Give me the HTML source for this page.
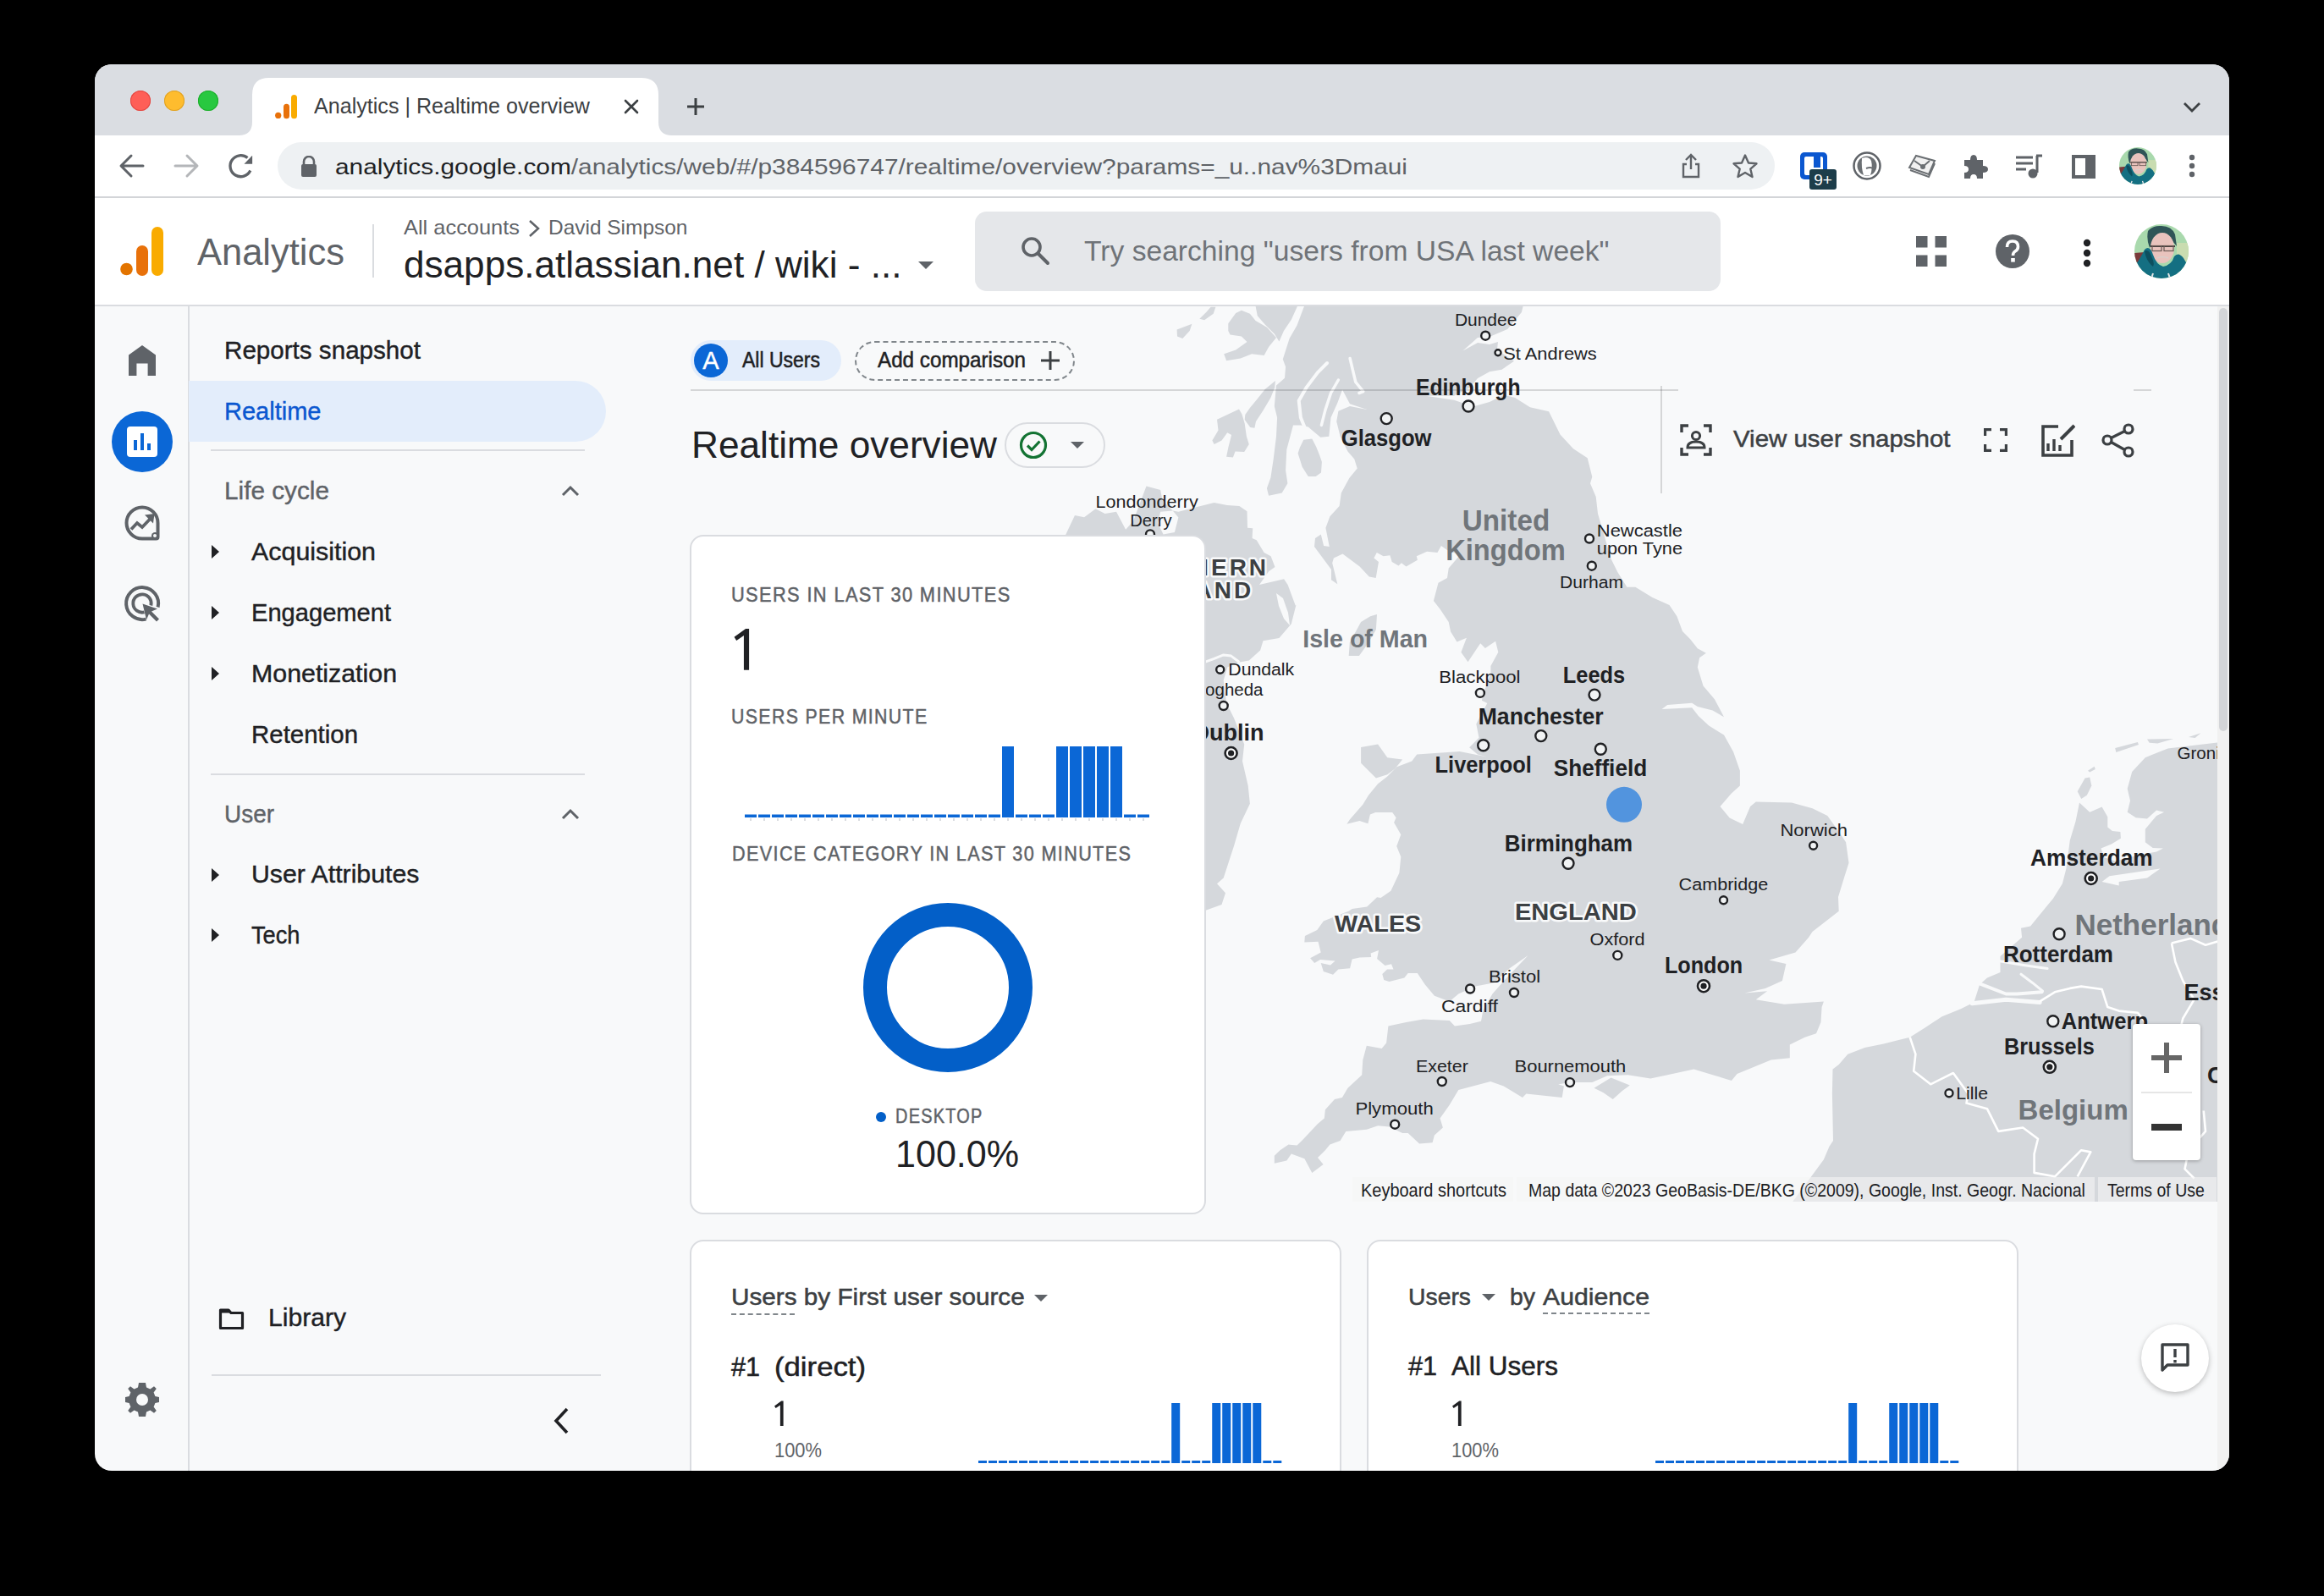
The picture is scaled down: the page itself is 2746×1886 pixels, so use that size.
<!DOCTYPE html>
<html><head><meta charset="utf-8"><style>
html,body{margin:0;padding:0;}
body{width:2746px;height:1886px;background:#000;position:relative;overflow:hidden;font-family:"Liberation Sans", sans-serif;}
.t{position:absolute;white-space:nowrap;}
.r{position:absolute;}
#W{position:absolute;left:0;top:0;width:2746px;height:1886px;clip-path:inset(76px 112px 148px 112px round 20px);}
#win{position:absolute;left:112px;top:76px;width:2522px;height:1662px;background:#f8f9fa;}
</style></head><body>
<div id="W"><div id="win"></div>
<div class="r" style="left:112px;top:76px;width:2522px;height:84px;background:#dadde2;"></div><div class="r" style="left:154px;top:107px;width:24px;height:24px;border-radius:50%;background:#fe5f57;box-shadow:inset 0 0 0 1px #e14640;"></div><div class="r" style="left:194px;top:107px;width:24px;height:24px;border-radius:50%;background:#febc2e;box-shadow:inset 0 0 0 1px #dfa123;"></div><div class="r" style="left:234px;top:107px;width:24px;height:24px;border-radius:50%;background:#28c840;box-shadow:inset 0 0 0 1px #1dad2b;"></div><svg class="r" style="left:282px;top:92px;" width="512" height="68" viewBox="0 0 512 68"><path d="M0 68 Q16 68 16 52 L16 20 Q16 0 36 0 L476 0 Q496 0 496 20 L496 52 Q496 68 512 68 Z" fill="#fff"/></svg><svg class="r" style="left:324px;top:110px;" width="30" height="32" viewBox="0 0 30 32"><circle cx="4.7" cy="26.4" r="3.6" fill="#e8710a"/><rect x="11" y="12.7" width="7" height="17.5" rx="3.5" fill="#e8710a"/><rect x="20" y="2" width="7" height="28.2" rx="3.5" fill="#f9ab00"/></svg><div class="t " style="left:371px;top:113.3px;font-size:25px;line-height:25px;color:#3c4043;font-weight:400;letter-spacing:0px;transform:scaleX(1.0041);transform-origin:0 0;">Analytics | Realtime overview</div><svg class="r" style="left:736px;top:116px;" width="20" height="20" viewBox="0 0 20 20"><path d="M3 3 L17 17 M17 3 L3 17" stroke="#3c4043" stroke-width="2.6" stroke-linecap="round"/></svg><svg class="r" style="left:810px;top:114px;" width="24" height="24" viewBox="0 0 24 24"><path d="M12 2 V22 M2 12 H22" stroke="#3c4043" stroke-width="3"/></svg><svg class="r" style="left:2578px;top:118px;" width="24" height="16" viewBox="0 0 24 16"><path d="M3 4 L12 13 L21 4" stroke="#3c4043" stroke-width="2.8" fill="none"/></svg><div class="r" style="left:112px;top:160px;width:2522px;height:72px;background:#ffffff;"></div><div class="r" style="left:112px;top:232px;width:2522px;height:2px;background:#d3d5d8;"></div><svg class="r" style="left:140px;top:181px;" width="32" height="30" viewBox="0 0 32 30"><path d="M29 15 H5 M15 3 L3 15 L15 27" stroke="#5f6368" stroke-width="3" fill="none" stroke-linecap="round" stroke-linejoin="round"/></svg><svg class="r" style="left:204px;top:181px;" width="32" height="30" viewBox="0 0 32 30"><path d="M3 15 H27 M17 3 L29 15 L17 27" stroke="#b4b6b9" stroke-width="3" fill="none" stroke-linecap="round" stroke-linejoin="round"/></svg><svg class="r" style="left:268px;top:181px;" width="34" height="32" viewBox="0 0 34 32"><path d="M24.5 5.6 A12.5 12.5 0 1 0 27.8 20.5" stroke="#5f6368" stroke-width="3.3" fill="none"/><path d="M30.1 2.7 L30.1 12.7 L20.5 12.7 Z" fill="#5f6368"/></svg><div class="r" style="left:328px;top:168px;width:1769px;height:56px;background:#eef1f3;border-radius:28px;"></div><svg class="r" style="left:354px;top:184px;" width="22" height="26" viewBox="0 0 22 26"><path d="M5 11 V7 A6 6 0 0 1 17 7 V11" stroke="#5f6368" stroke-width="2.6" fill="none"/><rect x="2" y="10" width="18" height="15" rx="2" fill="#5f6368"/></svg><div class="t " style="left:396px;top:184.0px;font-size:26px;line-height:26px;color:#5f6368;font-weight:400;letter-spacing:0px;transform:scaleX(1.1482);transform-origin:0 0;"><span style="color:#202124">analytics.google.com</span>/analytics/web/#/p384596747/realtime/overview?params=_u..nav%3Dmaui</div><svg class="r" style="left:1984px;top:180px;" width="28" height="32" viewBox="0 0 28 32"><path d="M14 20 V3 M8 9 L14 3 L20 9" stroke="#5f6368" stroke-width="2.4" fill="none"/><path d="M9 14 H5 V29 H23 V14 H19" stroke="#5f6368" stroke-width="2.4" fill="none"/></svg><svg class="r" style="left:2046px;top:181px;" width="32" height="32" viewBox="0 0 32 32"><path d="M16 2.5 L20 11.5 L29.5 12.3 L22.3 18.6 L24.5 28 L16 23 L7.5 28 L9.7 18.6 L2.5 12.3 L12 11.5 Z" stroke="#5f6368" stroke-width="2.4" fill="none" stroke-linejoin="round"/></svg><svg class="r" style="left:2124px;top:178px;" width="50" height="48" viewBox="0 0 50 48"><rect x="3" y="2" width="32" height="32" rx="5" fill="#0b57d0"/><rect x="8" y="7" width="22" height="22" rx="2" fill="#fff"/><rect x="19" y="7" width="8" height="13" fill="#0b57d0"/><rect x="14" y="22" width="32" height="24" rx="3" fill="#1d3d4a"/><text x="30" y="41" font-family="Liberation Sans" font-size="19" fill="#fff" text-anchor="middle">9+</text></svg><svg class="r" style="left:2188px;top:178px;" width="36" height="36" viewBox="0 0 36 36"><circle cx="18" cy="18" r="15.5" fill="#fff" stroke="#5f6368" stroke-width="2.5"/><circle cx="18" cy="18" r="11.5" fill="#6b6f73"/><path d="M12 9 Q20 6 23 12 Q25 20 22 29 L14 29 Q11 20 12 9Z" fill="#fff"/><path d="M17 21 Q22 19 25 21" stroke="#6b6f73" stroke-width="2" fill="none"/></svg><svg class="r" style="left:2252px;top:178px;" width="38" height="36" viewBox="0 0 38 36"><path d="M4 20 L12 6 L34 12 L27 28 Z" fill="#f1f1f1" stroke="#6b6f73" stroke-width="2"/><path d="M5 23 L27 31 L34 15" stroke="#6b6f73" stroke-width="2" fill="none"/><path d="M10 12 L20 19 L28 12" stroke="#6b6f73" stroke-width="2" fill="none"/><circle cx="20" cy="19" r="3" fill="#6b6f73"/></svg><svg class="r" style="left:2318px;top:180px;" width="32" height="32" viewBox="0 0 32 32"><path d="M3 9 H10 Q10 3 14 3 Q18 3 18 9 H25 V16 Q31 16 31 20 Q31 24 25 24 V31 H18 Q18 26 14 26 Q10 26 10 31 H3 V24 Q8 24 8 20 Q8 16 3 16 Z" fill="#5f6368"/></svg><svg class="r" style="left:2380px;top:180px;" width="36" height="32" viewBox="0 0 36 32"><path d="M2 6 H22 M2 13 H22 M2 20 H14" stroke="#5f6368" stroke-width="3"/><path d="M26 4 H33" stroke="#5f6368" stroke-width="3"/><path d="M27 4 V24" stroke="#5f6368" stroke-width="3"/><circle cx="22" cy="25" r="5.5" fill="#5f6368"/></svg><svg class="r" style="left:2446px;top:181px;" width="32" height="32" viewBox="0 0 32 32"><rect x="4" y="4" width="24" height="24" fill="none" stroke="#5f6368" stroke-width="4"/><rect x="18" y="4" width="10" height="24" fill="#5f6368"/></svg><svg class="r" style="left:2504px;top:174px;" width="44" height="44" viewBox="0 0 64 64"><defs><clipPath id="av2526"><circle cx="32" cy="32" r="32"/></clipPath></defs><g clip-path="url(#av2526)"><rect x="0" y="0" width="64" height="64" fill="#a9d9ad"/><rect x="50" y="22" width="14" height="22" fill="#c9dcb0"/><path d="M0 34 L12 33 L12 44 L0 46Z" fill="#7a3a3a"/><path d="M16 8 Q22 1 32 2 Q44 2 48 12 L50 26 L45 20 Q40 11 30 12 Q22 13 20 24 L18 28 Q14 18 16 8Z" fill="#2f5557"/><ellipse cx="33" cy="28" rx="14" ry="18" fill="#e9c3bd"/><path d="M19 26 H48" stroke="#4a4040" stroke-width="1.8"/><rect x="21" y="25.5" width="11" height="6" fill="none" stroke="#6a5a55" stroke-width="1.2"/><rect x="35" y="25.5" width="11" height="6" fill="none" stroke="#6a5a55" stroke-width="1.2"/><path d="M27 40 Q33 37 40 40" stroke="#d8d0cc" stroke-width="1.6" fill="none"/><path d="M0 50 Q6 42 12 30 Q18 24 22 36 Q26 48 34 50 Q44 48 47 38 Q52 32 58 40 Q62 46 64 52 L64 64 L0 64Z" fill="#146f82"/><path d="M12 32 Q17 28 21 40 Q24 46 22 50 Q14 44 12 32Z" fill="#0d4f5e"/><path d="M22 58 L20 64 M40 58 L42 64" stroke="#e8e8e8" stroke-width="2"/></g></svg><svg class="r" style="left:2580px;top:180px;" width="20" height="32" viewBox="0 0 20 32"><circle cx="10" cy="6" r="3.2" fill="#5f6368"/><circle cx="10" cy="16" r="3.2" fill="#5f6368"/><circle cx="10" cy="26" r="3.2" fill="#5f6368"/></svg><div class="r" style="left:112px;top:234px;width:2522px;height:126px;background:#ffffff;"></div><div class="r" style="left:112px;top:360px;width:2522px;height:2px;background:#dadce0;"></div><svg class="r" style="left:140px;top:266px;" width="56" height="62" viewBox="0 0 56 62"><circle cx="9.5" cy="52" r="7.3" fill="#e37400"/><rect x="21" y="24" width="14" height="36" rx="7" fill="#e8710a"/><rect x="39" y="2" width="14" height="58" rx="7" fill="#f9ab00"/></svg><div class="t " style="left:233px;top:275.8px;font-size:44px;line-height:44px;color:#5f6368;font-weight:400;letter-spacing:0px;transform:scaleX(0.9883);transform-origin:0 0;">Analytics</div><div class="r" style="left:440px;top:265px;width:2px;height:63px;background:#dadce0;"></div><div class="t " style="left:476.6px;top:256.7px;font-size:24px;line-height:24px;color:#5f6368;font-weight:400;letter-spacing:0px;transform:scaleX(1.0587);transform-origin:0 0;">All accounts</div><svg class="r" style="left:622px;top:259px;" width="18" height="22" viewBox="0 0 18 22"><path d="M4 2 L14 11 L4 20" stroke="#5f6368" stroke-width="2.5" fill="none"/></svg><div class="t " style="left:647.6px;top:256.7px;font-size:24px;line-height:24px;color:#5f6368;font-weight:400;letter-spacing:0px;transform:scaleX(1.0186);transform-origin:0 0;">David Simpson</div><div class="t " style="left:476.6px;top:290.8px;font-size:44px;line-height:44px;color:#202124;font-weight:400;letter-spacing:0px;transform:scaleX(1.0025);transform-origin:0 0;">dsapps.atlassian.net / wiki - ...</div><svg class="r" style="left:1084px;top:308px;" width="20" height="12" viewBox="0 0 20 12"><path d="M1 1 L19 1 L10 10 Z" fill="#5f6368"/></svg><div class="r" style="left:1152px;top:250px;width:881px;height:94px;background:#e5e7ea;border-radius:14px;"></div><svg class="r" style="left:1205px;top:278px;" width="36" height="38" viewBox="0 0 36 38"><circle cx="14" cy="14" r="10" stroke="#5f6368" stroke-width="3.6" fill="none"/><path d="M21.5 21.5 L33 33" stroke="#5f6368" stroke-width="4" stroke-linecap="round"/></svg><div class="t " style="left:1281px;top:280.1px;font-size:33px;line-height:33px;color:#6f7378;font-weight:400;letter-spacing:0px;transform:scaleX(1.0188);transform-origin:0 0;">Try searching "users from USA last week"</div><svg class="r" style="left:2262px;top:277px;" width="40" height="40" viewBox="0 0 40 40"><rect x="2" y="2" width="13.5" height="13.5" fill="#5f6368"/><rect x="24.5" y="2" width="13.5" height="13.5" fill="#5f6368"/><rect x="2" y="24.5" width="13.5" height="13.5" fill="#5f6368"/><rect x="24.5" y="24.5" width="13.5" height="13.5" fill="#5f6368"/></svg><svg class="r" style="left:2356px;top:275px;" width="44" height="44" viewBox="0 0 44 44"><circle cx="22" cy="22" r="20" fill="#5f6368"/><path d="M15.5 17 Q15.5 10 22 10 Q28.5 10 28.5 16.5 Q28.5 20 25 22 Q22.5 23.5 22.5 27" stroke="#fff" stroke-width="3.6" fill="none"/><rect x="20.2" y="30" width="4.6" height="4.6" fill="#fff"/></svg><svg class="r" style="left:2455px;top:280px;" width="22" height="38" viewBox="0 0 22 38"><circle cx="11" cy="7" r="4.2" fill="#202124"/><circle cx="11" cy="19" r="4.2" fill="#202124"/><circle cx="11" cy="31" r="4.2" fill="#202124"/></svg><svg class="r" style="left:2522px;top:265px;" width="64" height="64" viewBox="0 0 64 64"><defs><clipPath id="av2554"><circle cx="32" cy="32" r="32"/></clipPath></defs><g clip-path="url(#av2554)"><rect x="0" y="0" width="64" height="64" fill="#a9d9ad"/><rect x="50" y="22" width="14" height="22" fill="#c9dcb0"/><path d="M0 34 L12 33 L12 44 L0 46Z" fill="#7a3a3a"/><path d="M16 8 Q22 1 32 2 Q44 2 48 12 L50 26 L45 20 Q40 11 30 12 Q22 13 20 24 L18 28 Q14 18 16 8Z" fill="#2f5557"/><ellipse cx="33" cy="28" rx="14" ry="18" fill="#e9c3bd"/><path d="M19 26 H48" stroke="#4a4040" stroke-width="1.8"/><rect x="21" y="25.5" width="11" height="6" fill="none" stroke="#6a5a55" stroke-width="1.2"/><rect x="35" y="25.5" width="11" height="6" fill="none" stroke="#6a5a55" stroke-width="1.2"/><path d="M27 40 Q33 37 40 40" stroke="#d8d0cc" stroke-width="1.6" fill="none"/><path d="M0 50 Q6 42 12 30 Q18 24 22 36 Q26 48 34 50 Q44 48 47 38 Q52 32 58 40 Q62 46 64 52 L64 64 L0 64Z" fill="#146f82"/><path d="M12 32 Q17 28 21 40 Q24 46 22 50 Q14 44 12 32Z" fill="#0d4f5e"/><path d="M22 58 L20 64 M40 58 L42 64" stroke="#e8e8e8" stroke-width="2"/></g></svg><div class="r" style="left:222px;top:362px;width:2px;height:1376px;background:#dadce0;"></div><svg class="r" style="left:152px;top:408px;" width="32" height="36" viewBox="0 0 32 36"><path d="M16 0 L32 11.5 L32 36 L22.6 36 L22.6 21.5 L9.4 21.5 L9.4 36 L0 36 L0 11.5 Z" fill="#5f6368"/></svg><div class="r" style="left:132px;top:486px;width:72px;height:72px;border-radius:50%;background:#0b67d6;"></div><svg class="r" style="left:150px;top:504px;" width="36" height="36" viewBox="0 0 36 36"><rect x="0" y="0" width="36" height="36" rx="4" fill="#fff"/><rect x="8" y="16" width="4" height="12" fill="#0b67d6"/><rect x="16" y="8" width="4" height="20" fill="#0b67d6"/><rect x="24" y="20" width="4" height="8" fill="#0b67d6"/></svg><svg class="r" style="left:146px;top:596px;" width="44" height="44" viewBox="0 0 44 44"><path d="M22 3.5 A18.5 18.5 0 1 0 22 40.5 L38.5 40.5 Q40.5 40.5 40.5 38.5 L40.5 22 A18.5 18.5 0 0 0 22 3.5 Z" stroke="#5f6368" stroke-width="4" fill="none"/><path d="M9 29.5 L16 22 L22 27 L32 16.5" stroke="#5f6368" stroke-width="3.8" fill="none"/><path d="M25 12.5 L36.5 11 L35 22.5 Z" fill="#5f6368"/><circle cx="37.2" cy="37.2" r="4.2" fill="#5f6368"/><circle cx="37" cy="37" r="2" fill="#f8f9fa"/></svg><svg class="r" style="left:146px;top:691px;" width="48" height="48" viewBox="0 0 48 48"><g transform="translate(2 2)"><path d="M38.6 24.5 A19 19 0 1 0 24.5 38.6" stroke="#5f6368" stroke-width="4" fill="none"/><path d="M30.4 22.5 A10.7 10.7 0 1 0 22.5 30.4" stroke="#5f6368" stroke-width="3.8" fill="none"/><path d="M20.5 20.5 L38 26.5 L31 29.5 L40 38.5 L37 41.5 L28 32.5 L25 39.5 Z" fill="#5f6368"/></g></svg><svg class="r" style="left:148px;top:1634px;" width="40" height="40" viewBox="0 0 40 40"><path fill="#5f6368" d="M20 0 L24 0 L25 5.5 L29.5 7.5 L34 4.2 L36.8 7 L33.6 11.6 L35.4 16 L40 17 L40 23 L35.4 24 L33.6 28.4 L36.8 33 L34 35.8 L29.5 32.5 L25 34.5 L24 40 L16 40 L15 34.5 L10.5 32.5 L6 35.8 L3.2 33 L6.4 28.4 L4.6 24 L0 23 L0 17 L4.6 16 L6.4 11.6 L3.2 7 L6 4.2 L10.5 7.5 L15 5.5 L16 0 Z"/><circle cx="20" cy="20" r="7" fill="#f8f9fa"/></svg><div class="r" style="left:223px;top:450px;width:493px;height:72px;background:#e3edfb;border-radius:0 36px 36px 0;"></div><div class="t " style="left:265px;top:399.5px;font-size:29px;line-height:29px;color:#202124;font-weight:400;letter-spacing:0px;transform:scaleX(1.0207);transform-origin:0 0;-webkit-text-stroke:0.4px #202124;">Reports snapshot</div><div class="t " style="left:265px;top:471.5px;font-size:29px;line-height:29px;color:#0b57d0;font-weight:400;letter-spacing:0px;transform:scaleX(1.0006);transform-origin:0 0;-webkit-text-stroke:0.4px #0b57d0;">Realtime</div><div class="r" style="left:249px;top:531px;width:442px;height:2px;background:#dadce0;"></div><div class="t " style="left:265px;top:565.5px;font-size:29px;line-height:29px;color:#5f6368;font-weight:400;letter-spacing:0px;transform:scaleX(1.0258);transform-origin:0 0;-webkit-text-stroke:0.4px #5f6368;">Life cycle</div><svg class="r" style="left:662px;top:572px;" width="24" height="16" viewBox="0 0 24 16"><path d="M3 13 L12 4 L21 13" stroke="#5f6368" stroke-width="3" fill="none"/></svg><svg class="r" style="left:248px;top:642px;" width="14" height="20" viewBox="0 0 14 20"><path d="M2 2 L11 10 L2 18 Z" fill="#202124"/></svg><div class="t " style="left:297px;top:637.5px;font-size:29px;line-height:29px;color:#202124;font-weight:400;letter-spacing:0px;transform:scaleX(1.0482);transform-origin:0 0;-webkit-text-stroke:0.4px #202124;">Acquisition</div><svg class="r" style="left:248px;top:714px;" width="14" height="20" viewBox="0 0 14 20"><path d="M2 2 L11 10 L2 18 Z" fill="#202124"/></svg><div class="t " style="left:297px;top:709.5px;font-size:29px;line-height:29px;color:#202124;font-weight:400;letter-spacing:0px;transform:scaleX(1.0033);transform-origin:0 0;-webkit-text-stroke:0.4px #202124;">Engagement</div><svg class="r" style="left:248px;top:786px;" width="14" height="20" viewBox="0 0 14 20"><path d="M2 2 L11 10 L2 18 Z" fill="#202124"/></svg><div class="t " style="left:297px;top:781.5px;font-size:29px;line-height:29px;color:#202124;font-weight:400;letter-spacing:0px;transform:scaleX(1.0461);transform-origin:0 0;-webkit-text-stroke:0.4px #202124;">Monetization</div><div class="t " style="left:297px;top:853.5px;font-size:29px;line-height:29px;color:#202124;font-weight:400;letter-spacing:0px;transform:scaleX(1.0150);transform-origin:0 0;-webkit-text-stroke:0.4px #202124;">Retention</div><div class="r" style="left:249px;top:914px;width:442px;height:2px;background:#dadce0;"></div><div class="t " style="left:265px;top:947.5px;font-size:29px;line-height:29px;color:#5f6368;font-weight:400;letter-spacing:0px;transform:scaleX(0.9636);transform-origin:0 0;-webkit-text-stroke:0.4px #5f6368;">User</div><svg class="r" style="left:662px;top:954px;" width="24" height="16" viewBox="0 0 24 16"><path d="M3 13 L12 4 L21 13" stroke="#5f6368" stroke-width="3" fill="none"/></svg><svg class="r" style="left:248px;top:1023.7px;" width="14" height="20" viewBox="0 0 14 20"><path d="M2 2 L11 10 L2 18 Z" fill="#202124"/></svg><div class="t " style="left:297px;top:1019.2px;font-size:29px;line-height:29px;color:#202124;font-weight:400;letter-spacing:0px;transform:scaleX(1.0428);transform-origin:0 0;-webkit-text-stroke:0.4px #202124;">User Attributes</div><svg class="r" style="left:248px;top:1095px;" width="14" height="20" viewBox="0 0 14 20"><path d="M2 2 L11 10 L2 18 Z" fill="#202124"/></svg><div class="t " style="left:297px;top:1090.5px;font-size:29px;line-height:29px;color:#202124;font-weight:400;letter-spacing:0px;transform:scaleX(0.9384);transform-origin:0 0;-webkit-text-stroke:0.4px #202124;">Tech</div><svg class="r" style="left:256px;top:1544px;" width="36" height="30" viewBox="0 0 36 30"><path d="M4.5 4 H14 L17 7.5 H30.5 V25.5 H4.5 Z" fill="none" stroke="#202124" stroke-width="3.2" stroke-linejoin="round"/><path d="M4.5 4 H14 L17 7.5 H4.5Z" fill="#202124"/></svg><div class="t " style="left:317px;top:1542.5px;font-size:29px;line-height:29px;color:#202124;font-weight:400;letter-spacing:0px;transform:scaleX(1.0379);transform-origin:0 0;-webkit-text-stroke:0.4px #202124;">Library</div><div class="r" style="left:250px;top:1624px;width:460px;height:2px;background:#dadce0;"></div><svg class="r" style="left:650px;top:1662px;" width="26" height="34" viewBox="0 0 26 34"><path d="M20 3 L7 17 L20 31" stroke="#202124" stroke-width="3.6" fill="none"/></svg><svg class="r" style="left:0px;top:0px;" width="2746" height="1886" viewBox="0 0 2746 1886"><defs><clipPath id="mclip"><rect x="1190" y="362" width="1430" height="1058"/></clipPath></defs><g clip-path="url(#mclip)"><polygon points="1543.6,355.0 1801.2,355.0 1797.9,368.9 1781.2,388.9 1760.0,398.0 1746.0,399.0 1728.5,414.6 1746.0,405.0 1760.0,407.0 1770.0,404.0 1768.9,413.4 1789.0,426.7 1774.5,436.7 1760.0,439.2 1746.0,447.0 1736.7,457.9 1718.0,467.7 1684.6,467.7 1718.2,472.7 1740.5,480.6 1760.0,475.0 1776.7,466.8 1790.1,470.1 1807.9,481.2 1830.1,486.3 1843.5,513.5 1859.0,530.2 1875.7,541.3 1881.3,563.5 1879.0,571.3 1885.7,586.9 1888.0,606.9 1903.5,660.3 1911.3,675.9 1922.4,693.7 1932.4,693.7 1952.4,705.9 1972.5,715.0 1981.4,728.3 1988.0,746.1 1996.9,755.0 2005.8,766.2 2015.9,771.7 2008.1,777.3 2005.8,788.4 2012.5,810.6 2025.9,826.2 2037.0,847.3 2023.6,839.6 2005.8,835.1 1999.2,830.7 1970.2,832.9 1963.6,838.0 1999.2,836.2 2007.0,846.2 2019.2,857.4 2037.0,868.5 2048.1,888.5 2055.9,910.7 2055.9,928.5 2045.9,937.4 2032.5,953.0 2043.7,966.4 2059.2,974.1 2068.1,953.0 2074.8,947.4 2117.0,948.6 2141.5,955.2 2159.3,964.1 2174.4,985.3 2181.1,995.3 2184.5,1019.7 2178.9,1037.5 2172.0,1060.0 2172.7,1076.7 2141.5,1101.1 2137.1,1107.8 2121.5,1125.6 2090.4,1134.5 2110.4,1139.0 2105.9,1159.0 2085.9,1167.9 2061.4,1173.4 2088.1,1171.2 2074.8,1181.2 2108.2,1186.8 2154.9,1183.4 2152.6,1190.1 2151.5,1207.9 2146.0,1221.3 2132.6,1225.7 2114.8,1234.6 2114.8,1250.2 2092.6,1252.4 2065.9,1263.5 2052.5,1269.1 2045.9,1276.9 2001.4,1263.5 1950.2,1274.6 1923.5,1270.2 1899.1,1271.3 1881.3,1279.1 1856.8,1279.1 1841.2,1281.3 1847.9,1283.5 1845.7,1296.9 1803.4,1292.4 1799.0,1296.9 1776.7,1283.5 1761.2,1278.0 1723.3,1288.0 1712.7,1305.8 1701.5,1321.4 1704.9,1332.5 1694.9,1341.4 1692.6,1350.3 1677.1,1351.4 1663.7,1339.1 1657.1,1339.1 1641.5,1331.4 1628.1,1330.2 1614.8,1334.7 1590.3,1336.9 1583.6,1348.0 1571.4,1352.5 1565.9,1359.2 1557.0,1368.0 1563.6,1375.9 1550.3,1385.9 1541.4,1369.2 1525.8,1363.6 1520.3,1371.4 1505.8,1374.7 1505.8,1365.8 1512.5,1359.2 1522.5,1352.5 1532.5,1353.6 1539.2,1346.9 1557.0,1328.0 1564.8,1321.4 1565.9,1311.3 1577.0,1299.1 1585.9,1296.9 1592.5,1285.8 1609.2,1270.2 1610.3,1252.4 1614.8,1235.7 1632.6,1239.0 1638.1,1232.4 1640.4,1212.4 1661.5,1207.9 1681.5,1204.6 1712.7,1206.1 1718.9,1212.4 1736.7,1210.1 1750.0,1206.8 1752.3,1194.6 1763.4,1174.5 1781.2,1154.5 1805.6,1128.9 1783.4,1144.5 1765.6,1161.2 1743.4,1165.6 1723.3,1174.5 1712.7,1183.4 1694.9,1176.8 1683.8,1163.4 1674.8,1150.1 1663.7,1150.1 1659.3,1155.6 1641.5,1160.1 1635.2,1158.0 1633.3,1151.1 1639.0,1145.4 1646.5,1145.4 1644.0,1139.2 1636.5,1141.0 1627.1,1132.9 1629.0,1122.9 1619.6,1126.6 1620.2,1131.0 1606.4,1131.6 1597.6,1133.5 1595.1,1144.2 1581.3,1145.4 1575.1,1151.7 1563.8,1147.9 1560.7,1137.9 1572.0,1140.4 1577.6,1135.4 1560.0,1134.1 1553.2,1137.9 1548.1,1132.3 1560.7,1125.4 1557.5,1112.8 1541.3,1113.5 1541.9,1106.0 1556.3,1099.1 1563.8,1088.4 1593.9,1076.5 1597.6,1074.0 1615.2,1071.5 1627.1,1060.2 1631.5,1060.9 1643.4,1052.7 1653.4,1031.4 1655.3,1012.6 1650.2,1000.1 1655.3,986.3 1647.1,971.9 1649.6,966.3 1645.2,960.0 1625.2,960.0 1618.9,962.5 1616.4,973.2 1606.4,970.0 1591.4,973.8 1594.8,968.6 1610.3,950.8 1617.0,939.7 1628.1,926.3 1639.3,917.4 1650.4,906.3 1668.2,899.6 1674.2,891.4 1724.7,888.1 1757.3,894.6 1745.9,891.4 1736.1,883.2 1747.5,871.8 1744.3,855.5 1757.3,831.1 1750.8,827.8 1754.0,816.4 1761.4,795.2 1761.4,787.1 1770.3,770.8 1767.1,757.8 1754.9,765.9 1749.2,760.2 1734.5,782.2 1726.4,770.8 1732.9,753.7 1721.5,758.6 1714.1,746.4 1711.7,735.0 1701.7,720.0 1693.9,710.0 1699.5,688.7 1710.0,683.0 1711.7,671.4 1725.0,656.0 1710.0,650.0 1702.9,645.0 1698.4,652.9 1686.1,651.7 1673.8,657.3 1674.9,661.8 1661.5,669.6 1655.9,665.2 1652.5,668.5 1644.7,664.0 1642.4,656.2 1634.6,657.3 1626.8,652.9 1623.4,659.6 1629.0,664.0 1625.7,682.9 1617.8,681.4 1606.6,669.6 1586.5,654.5 1575.9,659.6 1574.2,665.2 1580.3,690.3 1573.0,685.3 1573.0,673.0 1553.0,646.0 1554.0,636.0 1560.8,631.6 1564.1,645.0 1570.8,646.1 1566.4,623.8 1571.4,610.3 1582.6,598.0 1584.8,582.4 1594.3,565.0 1603.7,553.5 1600.3,542.4 1592.5,533.5 1583.6,515.7 1579.2,497.9 1581.4,485.7 1595.0,480.1 1615.2,483.9 1595.0,477.2 1586.1,460.5 1580.5,475.7 1572.5,493.5 1570.3,515.7 1560.3,516.8 1545.8,504.6 1536.9,502.4 1528.0,502.4 1520.3,531.3 1519.1,555.7 1521.4,571.3 1514.7,582.4 1499.1,585.8 1496.9,576.9 1501.4,564.6 1504.7,542.4 1508.0,515.7 1509.1,493.5 1505.8,480.1 1508.0,455.6 1518.0,446.7 1519.1,433.4 1515.8,424.5 1523.6,400.0 1532.5,384.5" fill="#d5d8dc"/><polygon points="1200.0,640.0 1250.0,635.8 1258.9,632.5 1270.0,609.1 1281.1,611.3 1294.5,601.3 1305.6,606.9 1319.0,604.7 1330.1,625.8 1339.0,615.8 1354.5,574.6 1371.2,579.1 1373.5,591.3 1385.7,603.6 1392.4,604.7 1414.6,599.1 1434.6,594.0 1450.0,597.1 1464.4,598.0 1473.5,604.2 1474.0,623.8 1480.2,624.3 1479.6,636.0 1484.7,638.3 1493.6,652.9 1501.6,657.3 1506.5,670.1 1499.1,675.2 1488.0,691.0 1517.1,684.3 1521.6,691.0 1530.7,715.5 1531.4,715.0 1525.8,737.2 1511.4,753.9 1492.5,757.3 1489.1,768.4 1475.8,780.6 1463.5,782.8 1450.2,788.4 1445.7,804.0 1449.1,830.7 1458.0,848.5 1470.2,879.6 1468.0,899.6 1474.7,928.5 1476.9,949.7 1465.8,973.0 1458.0,999.7 1445.7,1037.5 1438.0,1044.2 1448.0,1055.3 1443.5,1069.0 1424.0,1076.0 1200.0,1076.0" fill="#d5d8dc"/><polygon points="1451.3,382.2 1460.2,370.0 1466.9,366.7 1476.9,370.7 1483.6,378.9 1496.9,386.7 1508.0,398.9 1499.1,410.0 1493.6,420.1 1479.1,418.3 1465.8,423.4 1449.1,426.3 1446.2,418.3 1460.2,413.4 1473.5,404.0 1466.9,397.4 1453.5,395.6 1451.3,391.1" fill="#d5d8dc"/><polygon points="1482.4,355.6 1535.8,355.6 1525.8,377.8 1516.9,391.1 1511.4,403.4 1505.8,394.5 1494.7,383.4 1485.8,373.3" fill="#d5d8dc"/><polygon points="1506.9,450.1 1494.7,460.1 1485.8,471.2 1476.9,481.9 1471.3,490.1 1470.7,496.1 1477.3,505.0 1482.4,505.7 1484.0,497.9 1492.5,485.0 1501.4,470.1 1506.2,457.9" fill="#d5d8dc"/><polygon points="1438.0,495.7 1448.6,490.8 1464.0,483.5 1467.5,489.5 1470.7,500.6 1472.9,515.7 1475.8,525.0 1470.2,533.9 1459.5,533.5 1456.9,540.6 1449.1,539.7 1451.3,529.1 1455.1,513.9 1450.2,511.3 1443.5,520.6 1434.6,525.0 1432.4,520.6 1439.5,508.6" fill="#d5d8dc"/><polygon points="1535.8,529.1 1540.3,519.7 1550.3,518.4 1555.2,527.9 1559.2,537.9 1561.9,545.7 1561.0,558.4 1554.7,562.9 1545.8,562.9 1538.7,551.7 1535.8,542.4 1533.6,535.7" fill="#d5d8dc"/><polygon points="1417.3,376.7 1425.7,368.5 1430.6,362.7 1436.4,362.7 1433.7,370.7 1423.1,378.2" fill="#d5d8dc"/><polygon points="1390.6,389.4 1408.4,382.7 1405.7,391.1 1397.3,400.0 1391.0,397.4" fill="#d5d8dc"/><polygon points="1593.7,775.1 1594.8,759.5 1608.1,735.0 1619.2,728.3 1627.0,726.1 1625.9,743.9 1617.0,759.5 1605.9,775.1" fill="#d5d8dc"/><polygon points="1608.1,882.9 1628.1,879.6 1639.3,895.2 1657.1,897.4 1648.2,908.5 1639.3,915.2 1625.9,919.6 1608.1,901.8" fill="#d5d8dc"/><polygon points="1883.5,1285.8 1903.5,1273.5 1925.8,1282.4 1916.9,1289.1 1905.7,1299.1 1894.6,1291.3" fill="#d5d8dc"/><polygon points="2454.7,935.2 2463.6,919.6 2469.2,918.5 2471.4,928.5 2465.8,939.7 2459.2,944.1" fill="#d5d8dc"/><polygon points="2467.0,910.7 2474.7,905.8 2475.8,909.0 2469.2,912.5" fill="#d5d8dc"/><polygon points="2499.2,884.1 2525.9,876.9 2527.0,880.0 2500.3,888.9" fill="#d5d8dc"/><polygon points="2537.0,873.6 2568.2,872.9 2549.3,878.5 2539.7,877.8" fill="#d5d8dc"/><polygon points="2586.0,871.1 2600.4,866.3 2593.7,872.0" fill="#d5d8dc"/><polygon points="2110.8,1430.0 2139.3,1391.4 2154.9,1370.3 2161.5,1354.7 2166.0,1348.0 2164.9,1292.4 2165.5,1263.5 2172.7,1258.0 2183.3,1245.7 2203.4,1237.9 2225.6,1233.5 2243.4,1229.0 2256.7,1225.7 2274.5,1214.6 2294.6,1201.2 2316.8,1192.3 2332.4,1184.6 2339.1,1163.4 2348.0,1155.6 2363.5,1149.0 2363.5,1130.1 2389.1,1107.8 2388.0,1096.7 2399.1,1094.5 2419.1,1070.0 2425.8,1062.0 2436.9,1044.2 2441.4,1026.4 2445.8,993.0 2452.5,970.8 2457.0,948.6 2469.2,959.7 2483.6,953.4 2490.3,965.2 2490.3,977.5 2495.9,981.9 2505.4,983.0 2505.9,990.8 2494.8,997.5 2482.5,1002.4 2485.9,1013.1 2499.2,1017.5 2525.9,1010.8 2548.1,1006.4 2555.9,1002.4 2543.7,1001.9 2534.8,995.3 2534.8,979.7 2548.1,964.1 2557.0,959.7 2548.1,957.5 2537.0,967.5 2523.7,966.3 2513.7,959.7 2517.0,946.3 2513.7,931.9 2519.2,911.9 2534.8,895.2 2561.5,884.5 2592.6,880.7 2621.5,877.4 2640.0,877.0 2640.0,1430.0" fill="#d5d8dc"/><polygon points="2492.5,1035.3 2552.6,1026.4 2537.0,1037.5 2503.7,1042.0 2503.7,1046.4 2483.6,1042.0" fill="#f8f9fa"/><polygon points="1371.2,604.7 1385.7,603.6 1392.4,611.4 1387.9,629.1 1374.6,631.4 1367.9,618.0" fill="#f8f9fa"/><polygon points="1508.0,701.0 1516.0,707.0 1522.0,724.0 1524.0,739.0 1517.0,731.0 1511.0,716.0" fill="#f8f9fa"/><polyline points="1568.1,429.0 1557.0,440.1 1543.6,457.9 1534.7,473.4 1536.9,493.5 1541.4,504.6" fill="none" stroke="#f8f9fa" stroke-width="4" stroke-linejoin="round" stroke-linecap="round"/><polyline points="1581.4,449.0 1572.5,464.5 1565.9,484.6 1561.4,502.4" fill="none" stroke="#f8f9fa" stroke-width="3.5" stroke-linejoin="round" stroke-linecap="round"/><polyline points="1595.1,423.5 1601.8,451.5 1610.8,462.7 1605.9,464.5" fill="none" stroke="#f8f9fa" stroke-width="3.5" stroke-linejoin="round" stroke-linecap="round"/><polyline points="1425.7,781.7 1434.6,778.4 1445.7,773.9 1454.6,775.1 1463.5,781.7" fill="none" stroke="#f8f9fa" stroke-width="3" stroke-linejoin="round" stroke-linecap="round"/><polyline points="2361.3,1135.6 2392.4,1140.7 2419.1,1144.5" fill="none" stroke="#f8f9fa" stroke-width="3" stroke-linejoin="round" stroke-linecap="round"/><polyline points="2388.0,1151.2 2401.3,1161.2 2413.6,1171.2" fill="none" stroke="#f8f9fa" stroke-width="3" stroke-linejoin="round" stroke-linecap="round"/><polyline points="2339.1,1162.3 2370.2,1174.5 2383.5,1174.5 2412.5,1172.3" fill="none" stroke="#f8f9fa" stroke-width="4" stroke-linejoin="round" stroke-linecap="round"/><polyline points="2330.2,1185.7 2370.2,1181.2 2410.2,1184.6" fill="none" stroke="#f8f9fa" stroke-width="5" stroke-linejoin="round" stroke-linecap="round"/><polyline points="2256.7,1225.7 2263.4,1245.7 2261.2,1265.7 2281.2,1281.3 2307.9,1268.0 2325.7,1292.4 2323.5,1303.6 2347.9,1310.2 2361.3,1336.9 2390.2,1332.5 2408.0,1345.8 2403.6,1363.6 2403.6,1385.9 2428.0,1390.3 2459.2,1359.2 2470.3,1361.4 2454.7,1390.3" fill="none" stroke="#ffffff" stroke-width="2.6" stroke-linejoin="round"/><polyline points="2410.2,1183.4 2428.0,1172.3 2445.8,1167.9 2459.2,1165.6 2483.6,1169.0 2490.3,1190.1 2503.7,1194.6 2525.9,1196.8 2534.8,1207.9" fill="none" stroke="#ffffff" stroke-width="2.6" stroke-linejoin="round"/><polyline points="2565.9,1114.5 2588.2,1108.9 2606.0,1116.7 2621.5,1112.3" fill="none" stroke="#ffffff" stroke-width="2.6" stroke-linejoin="round"/><polyline points="2565.9,1114.5 2570.4,1136.7 2579.3,1159.0 2592.6,1181.2 2579.3,1203.5 2577.1,1212.4" fill="none" stroke="#ffffff" stroke-width="2.6" stroke-linejoin="round"/><polyline points="2603.7,1312.5 2606.0,1336.9 2586.0,1359.2 2581.5,1381.4 2592.6,1392.5" fill="none" stroke="#ffffff" stroke-width="2.6" stroke-linejoin="round"/></g></svg><svg class="r" style="left:0px;top:0px;" width="2746" height="1886" viewBox="0 0 2746 1886"><g clip-path="url(#mclip2)"><defs><clipPath id="mclip2"><rect x="1190" y="362" width="1430" height="1058"/></clipPath></defs><circle cx="1755.2" cy="396.7" r="5" fill="#f1f3f4" stroke="#202124" stroke-width="2.4"/><circle cx="1770" cy="416.7" r="3.5" fill="#f1f3f4" stroke="#202124" stroke-width="2.4"/><circle cx="1735" cy="480" r="6.5" fill="#f1f3f4" stroke="#202124" stroke-width="2.4"/><circle cx="1638.2" cy="494.6" r="6.5" fill="#f1f3f4" stroke="#202124" stroke-width="2.4"/><circle cx="1878" cy="636.5" r="5" fill="#f1f3f4" stroke="#202124" stroke-width="2.4"/><circle cx="1880.8" cy="668.7" r="5" fill="#f1f3f4" stroke="#202124" stroke-width="2.4"/><circle cx="1441.7" cy="791.3" r="4.5" fill="#f1f3f4" stroke="#202124" stroke-width="2.4"/><circle cx="1445.7" cy="834" r="5" fill="#f1f3f4" stroke="#202124" stroke-width="2.4"/><circle cx="1748.9" cy="818.9" r="5" fill="#f1f3f4" stroke="#202124" stroke-width="2.4"/><circle cx="1884" cy="821.1" r="6.5" fill="#f1f3f4" stroke="#202124" stroke-width="2.4"/><circle cx="1820.8" cy="869.6" r="6.5" fill="#f1f3f4" stroke="#202124" stroke-width="2.4"/><circle cx="1752.7" cy="880.7" r="6.5" fill="#f1f3f4" stroke="#202124" stroke-width="2.4"/><circle cx="1891.3" cy="885.2" r="6.5" fill="#f1f3f4" stroke="#202124" stroke-width="2.4"/><circle cx="1853" cy="1020.2" r="6.5" fill="#f1f3f4" stroke="#202124" stroke-width="2.4"/><circle cx="2142.6" cy="999.3" r="4.5" fill="#f1f3f4" stroke="#202124" stroke-width="2.4"/><circle cx="2036.5" cy="1063.8" r="4.5" fill="#f1f3f4" stroke="#202124" stroke-width="2.4"/><circle cx="1911.3" cy="1128.9" r="5" fill="#f1f3f4" stroke="#202124" stroke-width="2.4"/><circle cx="1789" cy="1173" r="5" fill="#f1f3f4" stroke="#202124" stroke-width="2.4"/><circle cx="1737.1" cy="1168.5" r="5" fill="#f1f3f4" stroke="#202124" stroke-width="2.4"/><circle cx="1703.8" cy="1278" r="5" fill="#f1f3f4" stroke="#202124" stroke-width="2.4"/><circle cx="1648.2" cy="1328.7" r="5" fill="#f1f3f4" stroke="#202124" stroke-width="2.4"/><circle cx="1855" cy="1279.1" r="5" fill="#f1f3f4" stroke="#202124" stroke-width="2.4"/><circle cx="2433.1" cy="1103.8" r="6.5" fill="#f1f3f4" stroke="#202124" stroke-width="2.4"/><circle cx="2425.8" cy="1206.8" r="6.5" fill="#f1f3f4" stroke="#202124" stroke-width="2.4"/><circle cx="2303" cy="1291.8" r="4.5" fill="#f1f3f4" stroke="#202124" stroke-width="2.4"/><circle cx="1359" cy="631.4" r="5" fill="#f1f3f4" stroke="#202124" stroke-width="2.4"/><circle cx="1454.6" cy="890" r="7" fill="#fff" stroke="#202124" stroke-width="2.6"/><circle cx="1454.6" cy="890" r="3.6" fill="#202124"/><circle cx="2013" cy="1165.2" r="7" fill="#fff" stroke="#202124" stroke-width="2.6"/><circle cx="2013" cy="1165.2" r="3.6" fill="#202124"/><circle cx="2470.7" cy="1038" r="7" fill="#fff" stroke="#202124" stroke-width="2.6"/><circle cx="2470.7" cy="1038" r="3.6" fill="#202124"/><circle cx="2421.8" cy="1260.8" r="7" fill="#fff" stroke="#202124" stroke-width="2.6"/><circle cx="2421.8" cy="1260.8" r="3.6" fill="#202124"/><circle cx="1919" cy="950.8" r="21" fill="#5294de"/><g font-family="Liberation Sans"><text x="1718.9" y="385.1" font-size="20.5" fill="#202124" font-weight="400" letter-spacing="0" textLength="73.4" lengthAdjust="spacingAndGlyphs">Dundee</text><text x="1776.3" y="424.5" font-size="20.5" fill="#202124" font-weight="400" letter-spacing="0" textLength="110.5" lengthAdjust="spacingAndGlyphs">St Andrews</text><text x="1294.5" y="600.2" font-size="20.5" fill="#202124" font-weight="400" letter-spacing="0" textLength="121.2" lengthAdjust="spacingAndGlyphs">Londonderry</text><text x="1335.2" y="622.0" font-size="20.5" fill="#202124" font-weight="400" letter-spacing="0" textLength="49.4" lengthAdjust="spacingAndGlyphs">Derry</text><text x="1886.8" y="633.6" font-size="20.5" fill="#202124" font-weight="400" letter-spacing="0" textLength="101.2" lengthAdjust="spacingAndGlyphs">Newcastle</text><text x="1886.8" y="654.7" font-size="20.5" fill="#202124" font-weight="400" letter-spacing="0" textLength="101.2" lengthAdjust="spacingAndGlyphs">upon Tyne</text><text x="1843.0" y="694.8" font-size="20.5" fill="#202124" font-weight="400" letter-spacing="0" textLength="75.0" lengthAdjust="spacingAndGlyphs">Durham</text><text x="1451.3" y="798.4" font-size="20.5" fill="#202124" font-weight="400" letter-spacing="0" textLength="77.9" lengthAdjust="spacingAndGlyphs">Dundalk</text><text x="1700.3" y="807.3" font-size="20.5" fill="#202124" font-weight="400" letter-spacing="0" textLength="96.2" lengthAdjust="spacingAndGlyphs">Blackpool</text><text x="1983.6" y="1052.0" font-size="20.5" fill="#202124" font-weight="400" letter-spacing="0" textLength="105.6" lengthAdjust="spacingAndGlyphs">Cambridge</text><text x="2103.4" y="987.6" font-size="20.5" fill="#202124" font-weight="400" letter-spacing="0" textLength="79.6" lengthAdjust="spacingAndGlyphs">Norwich</text><text x="1878.6" y="1117.2" font-size="20.5" fill="#202124" font-weight="400" letter-spacing="0" textLength="65.0" lengthAdjust="spacingAndGlyphs">Oxford</text><text x="1758.9" y="1161.2" font-size="20.5" fill="#202124" font-weight="400" letter-spacing="0" textLength="61.2" lengthAdjust="spacingAndGlyphs">Bristol</text><text x="1702.9" y="1195.6" font-size="20.5" fill="#202124" font-weight="400" letter-spacing="0" textLength="67.1" lengthAdjust="spacingAndGlyphs">Cardiff</text><text x="1673.0" y="1267.0" font-size="20.5" fill="#202124" font-weight="400" letter-spacing="0" textLength="61.8" lengthAdjust="spacingAndGlyphs">Exeter</text><text x="1601.4" y="1316.9" font-size="20.5" fill="#202124" font-weight="400" letter-spacing="0" textLength="92.4" lengthAdjust="spacingAndGlyphs">Plymouth</text><text x="1789.6" y="1266.9" font-size="20.5" fill="#202124" font-weight="400" letter-spacing="0" textLength="131.7" lengthAdjust="spacingAndGlyphs">Bournemouth</text><text x="2311.2" y="1299.1" font-size="20.5" fill="#202124" font-weight="400" letter-spacing="0" textLength="37.8" lengthAdjust="spacingAndGlyphs">Lille</text><text x="2572.6" y="897.4" font-size="20.5" fill="#202124" font-weight="400" letter-spacing="0">Groningen</text><text x="1492.5" y="821.8" font-size="20.5" fill="#202124" font-weight="400" letter-spacing="0" text-anchor="end">Drogheda</text><text x="1672.9" y="466.6" font-size="27" fill="#202124" font-weight="700" letter-spacing="0" textLength="123.6" lengthAdjust="spacingAndGlyphs">Edinburgh</text><text x="1584.8" y="526.8" font-size="27" fill="#202124" font-weight="700" letter-spacing="0" textLength="106.7" lengthAdjust="spacingAndGlyphs">Glasgow</text><text x="1846.8" y="807.3" font-size="27" fill="#202124" font-weight="700" letter-spacing="0" textLength="73.4" lengthAdjust="spacingAndGlyphs">Leeds</text><text x="1746.7" y="856.2" font-size="27" fill="#202124" font-weight="700" letter-spacing="0" textLength="147.9" lengthAdjust="spacingAndGlyphs">Manchester</text><text x="1695.6" y="913.0" font-size="27" fill="#202124" font-weight="700" letter-spacing="0" textLength="114.2" lengthAdjust="spacingAndGlyphs">Liverpool</text><text x="1835.7" y="917.4" font-size="27" fill="#202124" font-weight="700" letter-spacing="0" textLength="110.5" lengthAdjust="spacingAndGlyphs">Sheffield</text><text x="1777.8" y="1006.4" font-size="27" fill="#202124" font-weight="700" letter-spacing="0" textLength="151.3" lengthAdjust="spacingAndGlyphs">Birmingham</text><text x="1966.9" y="1150.1" font-size="27" fill="#202124" font-weight="700" letter-spacing="0" textLength="92.3" lengthAdjust="spacingAndGlyphs">London</text><text x="2399.1" y="1023.1" font-size="27" fill="#202124" font-weight="700" letter-spacing="0" textLength="144.6" lengthAdjust="spacingAndGlyphs">Amsterdam</text><text x="2366.9" y="1136.7" font-size="27" fill="#202124" font-weight="700" letter-spacing="0" textLength="130.1" lengthAdjust="spacingAndGlyphs">Rotterdam</text><text x="2435.8" y="1215.7" font-size="27" fill="#202124" font-weight="700" letter-spacing="0" textLength="102.2" lengthAdjust="spacingAndGlyphs">Antwerp</text><text x="2368.0" y="1245.7" font-size="27" fill="#202124" font-weight="700" letter-spacing="0" textLength="106.7" lengthAdjust="spacingAndGlyphs">Brussels</text><text x="2580.4" y="1182.3" font-size="27" fill="#202124" font-weight="700" letter-spacing="0">Essen</text><text x="2608.0" y="1280.0" font-size="27" fill="#202124" font-weight="700" letter-spacing="0">Cologne</text><text x="1493.6" y="875.2" font-size="27" fill="#202124" font-weight="700" letter-spacing="0" text-anchor="end">Dublin</text><text x="1727.8" y="627.0" font-size="35" fill="#70757a" font-weight="700" letter-spacing="0" textLength="103.4" lengthAdjust="spacingAndGlyphs">United</text><text x="1708.2" y="662.2" font-size="35" fill="#70757a" font-weight="700" letter-spacing="0" textLength="141.5" lengthAdjust="spacingAndGlyphs">Kingdom</text><text x="1539.2" y="765.0" font-size="29" fill="#70757a" font-weight="700" letter-spacing="0" textLength="147.9" lengthAdjust="spacingAndGlyphs">Isle of Man</text><text x="2451.4" y="1104.5" font-size="35" fill="#70757a" font-weight="700" letter-spacing="0">Netherlands</text><text x="2384.6" y="1322.5" font-size="34" fill="#70757a" font-weight="700" letter-spacing="0" textLength="130.2" lengthAdjust="spacingAndGlyphs">Belgium</text><text x="1577.0" y="1101.1" font-size="27" fill="#3c4043" font-weight="700" letter-spacing="0" textLength="102.3" lengthAdjust="spacingAndGlyphs" stroke="#f8f9fa" stroke-width="5" paint-order="stroke" stroke-linejoin="round">WALES</text><text x="1789.9" y="1087.3" font-size="27" fill="#3c4043" font-weight="700" letter-spacing="0" textLength="144.0" lengthAdjust="spacingAndGlyphs" stroke="#f8f9fa" stroke-width="5" paint-order="stroke" stroke-linejoin="round">ENGLAND</text><text x="1499.1" y="680.3" font-size="28" fill="#3c4043" font-weight="700" letter-spacing="3" stroke="#f8f9fa" stroke-width="5" paint-order="stroke" stroke-linejoin="round" text-anchor="end">NORTHERN</text><text x="1481.3" y="707.0" font-size="28" fill="#3c4043" font-weight="700" letter-spacing="3" stroke="#f8f9fa" stroke-width="5" paint-order="stroke" stroke-linejoin="round" text-anchor="end">IRELAND</text></g></g></svg><div class="r" style="left:2520px;top:1210px;width:80px;height:161px;border-radius:4px;background:#fff;box-shadow:0 1px 4px rgba(0,0,0,0.3);"></div><div class="r" style="left:2542px;top:1247px;width:36px;height:5.5px;background:#666666;"></div><div class="r" style="left:2557.2px;top:1231.7px;width:5.5px;height:36px;background:#666666;"></div><div class="r" style="left:2530px;top:1290px;width:60px;height:2px;background:#e6e6e6;"></div><div class="r" style="left:2542px;top:1328px;width:36px;height:8px;background:#333333;"></div><div class="r" style="left:1598px;top:1391px;width:190px;height:29px;background:rgba(245,245,245,0.6);"></div><div class="r" style="left:1792px;top:1391px;width:683px;height:29px;background:rgba(245,245,245,0.6);"></div><div class="r" style="left:2479px;top:1391px;width:140px;height:29px;background:rgba(245,245,245,0.6);"></div><div class="t " style="left:1608px;top:1396.4px;font-size:22px;line-height:22px;color:#202124;font-weight:400;letter-spacing:0px;transform:scaleX(0.9074);transform-origin:0 0;">Keyboard shortcuts</div><div class="t " style="left:1806px;top:1396.4px;font-size:22px;line-height:22px;color:#202124;font-weight:400;letter-spacing:0px;transform:scaleX(0.8871);transform-origin:0 0;">Map data ©2023 GeoBasis-DE/BKG (©2009), Google, Inst. Geogr. Nacional</div><div class="t " style="left:2490px;top:1396.4px;font-size:22px;line-height:22px;color:#202124;font-weight:400;letter-spacing:0px;transform:scaleX(0.8862);transform-origin:0 0;">Terms of Use</div><div class="r" style="left:816px;top:402px;width:178px;height:48px;background:#e3edfb;border-radius:24px;"></div><div class="r" style="left:820px;top:406px;width:40px;height:40px;border-radius:50%;background:#0b67d6;"></div><div class="t " style="left:840px;top:412.0px;font-size:29px;line-height:29px;color:#ffffff;font-weight:400;letter-spacing:0px;transform:translateX(-50%) scaleX(1.0);transform-origin:0 0;-webkit-text-stroke:0.4px #ffffff;">A</div><div class="t " style="left:877px;top:412.8px;font-size:25px;line-height:25px;color:#202124;font-weight:400;letter-spacing:0px;transform:scaleX(0.9199);transform-origin:0 0;-webkit-text-stroke:0.5px #202124;">All Users</div><div class="r" style="left:1010px;top:403px;width:260px;height:47px;border-radius:24px;border:2px dashed #80868b;box-sizing:border-box;"></div><div class="t " style="left:1037px;top:412.8px;font-size:25px;line-height:25px;color:#202124;font-weight:400;letter-spacing:0px;transform:scaleX(0.9687);transform-origin:0 0;-webkit-text-stroke:0.5px #202124;">Add comparison</div><svg class="r" style="left:1228px;top:413px;" width="26" height="26" viewBox="0 0 26 26"><path d="M13 2 V24 M2 13 H24" stroke="#3c4043" stroke-width="3"/></svg><div class="r" style="left:816px;top:460px;width:1167px;height:2px;background:rgba(32,33,36,0.16);"></div><div class="r" style="left:2521px;top:460px;width:21px;height:2px;background:rgba(32,33,36,0.16);"></div><div class="r" style="left:1962px;top:456px;width:2px;height:127px;background:rgba(32,33,36,0.16);"></div><div class="t " style="left:817px;top:503.4px;font-size:45px;line-height:45px;color:#202124;font-weight:400;letter-spacing:0px;transform:scaleX(0.9820);transform-origin:0 0;">Realtime overview</div><div class="r" style="left:1187px;top:499px;width:119px;height:54px;border-radius:27px;border:2px solid #dadce0;box-sizing:border-box;"></div><svg class="r" style="left:1203px;top:508px;" width="36" height="36" viewBox="0 0 36 36"><circle cx="18" cy="18" r="14.5" stroke="#137333" stroke-width="3.2" fill="none"/><path d="M11 18.5 L16 23.5 L25.5 13.5" stroke="#137333" stroke-width="3.2" fill="none"/></svg><svg class="r" style="left:1264px;top:521px;" width="18" height="10" viewBox="0 0 18 10"><path d="M1 1 L17 1 L9 9 Z" fill="#5f6368"/></svg><svg class="r" style="left:1985px;top:501px;" width="38" height="38" viewBox="0 0 38 38"><path d="M2 10 V2 H10 M28 2 H36 V10 M36 28 V36 H28 M10 36 H2 V28" stroke="#3c4043" stroke-width="3.4" fill="none"/><circle cx="19" cy="14" r="4.6" stroke="#3c4043" stroke-width="3" fill="none"/><path d="M9 28 Q9 21 19 21 Q29 21 29 28 Z" stroke="#3c4043" stroke-width="3" fill="none"/></svg><div class="t " style="left:2048px;top:505.3px;font-size:28px;line-height:28px;color:#3c4043;font-weight:400;letter-spacing:0px;transform:scaleX(1.0517);transform-origin:0 0;-webkit-text-stroke:0.5px #3c4043;">View user snapshot</div><svg class="r" style="left:2344px;top:506px;" width="28" height="28" viewBox="0 0 28 28"><path d="M1.5 9 V1.5 H9 M19 1.5 H26.5 V9 M26.5 19 V26.5 H19 M9 26.5 H1.5 V19" stroke="#3c4043" stroke-width="3.4" fill="none"/></svg><svg class="r" style="left:2410px;top:500px;" width="42" height="42" viewBox="0 0 42 42"><path d="M22 4 H4 V38 H38 V20" stroke="#3c4043" stroke-width="3.6" fill="none"/><path d="M10 24 V33 M17 19 V33 M24 26 V33" stroke="#3c4043" stroke-width="3.4"/><path d="M25 19 L37 7 L41 3" stroke="#3c4043" stroke-width="4" fill="none"/></svg><svg class="r" style="left:2482px;top:500px;" width="42" height="42" viewBox="0 0 42 42"><circle cx="33" cy="7" r="5" stroke="#3c4043" stroke-width="3.2" fill="none"/><circle cx="8" cy="20" r="5" stroke="#3c4043" stroke-width="3.2" fill="none"/><circle cx="33" cy="34" r="5" stroke="#3c4043" stroke-width="3.2" fill="none"/><path d="M12.5 17.5 L28.5 9.5 M12.5 22.5 L28.5 31.5" stroke="#3c4043" stroke-width="3.2"/></svg><div class="r" style="left:815px;top:632px;width:610px;height:803px;border-radius:16px;border:2px solid #dadce0;box-sizing:border-box;background:#fff;"></div><div class="t " style="left:864px;top:690.7px;font-size:24px;line-height:24px;color:#5f6368;font-weight:400;letter-spacing:1.5px;transform:scaleX(0.9091);transform-origin:0 0;-webkit-text-stroke:0.5px #5f6368;">USERS IN LAST 30 MINUTES</div><svg class="r" style="left:0px;top:0px;" width="2746" height="1886" viewBox="0 0 2746 1886"><polygon points="881.10,742.90 885.10,742.90 885.10,791.80 878.90,791.80 878.90,751.00 870.20,757.00 867.50,752.80" fill="#202124"/></svg><div class="t " style="left:864px;top:834.7px;font-size:24px;line-height:24px;color:#5f6368;font-weight:400;letter-spacing:1.5px;transform:scaleX(0.8896);transform-origin:0 0;-webkit-text-stroke:0.5px #5f6368;">USERS PER MINUTE</div><svg class="r" style="left:880px;top:882px;" width="480" height="88" viewBox="0 0 480 88"><rect x="0" y="80.5" width="14" height="3.5" fill="#0b67d6"/><rect x="6" y="85" width="2" height="3" fill="#dadce0"/><rect x="16" y="80.5" width="14" height="3.5" fill="#0b67d6"/><rect x="22" y="85" width="2" height="3" fill="#dadce0"/><rect x="32" y="80.5" width="14" height="3.5" fill="#0b67d6"/><rect x="38" y="85" width="2" height="3" fill="#dadce0"/><rect x="48" y="80.5" width="14" height="3.5" fill="#0b67d6"/><rect x="54" y="85" width="2" height="3" fill="#dadce0"/><rect x="64" y="80.5" width="14" height="3.5" fill="#0b67d6"/><rect x="70" y="85" width="2" height="3" fill="#dadce0"/><rect x="80" y="80.5" width="14" height="3.5" fill="#0b67d6"/><rect x="86" y="85" width="2" height="3" fill="#dadce0"/><rect x="96" y="80.5" width="14" height="3.5" fill="#0b67d6"/><rect x="102" y="85" width="2" height="3" fill="#dadce0"/><rect x="112" y="80.5" width="14" height="3.5" fill="#0b67d6"/><rect x="118" y="85" width="2" height="3" fill="#dadce0"/><rect x="128" y="80.5" width="14" height="3.5" fill="#0b67d6"/><rect x="134" y="85" width="2" height="3" fill="#dadce0"/><rect x="144" y="80.5" width="14" height="3.5" fill="#0b67d6"/><rect x="150" y="85" width="2" height="3" fill="#dadce0"/><rect x="160" y="80.5" width="14" height="3.5" fill="#0b67d6"/><rect x="166" y="85" width="2" height="3" fill="#dadce0"/><rect x="176" y="80.5" width="14" height="3.5" fill="#0b67d6"/><rect x="182" y="85" width="2" height="3" fill="#dadce0"/><rect x="192" y="80.5" width="14" height="3.5" fill="#0b67d6"/><rect x="198" y="85" width="2" height="3" fill="#dadce0"/><rect x="208" y="80.5" width="14" height="3.5" fill="#0b67d6"/><rect x="214" y="85" width="2" height="3" fill="#dadce0"/><rect x="224" y="80.5" width="14" height="3.5" fill="#0b67d6"/><rect x="230" y="85" width="2" height="3" fill="#dadce0"/><rect x="240" y="80.5" width="14" height="3.5" fill="#0b67d6"/><rect x="246" y="85" width="2" height="3" fill="#dadce0"/><rect x="256" y="80.5" width="14" height="3.5" fill="#0b67d6"/><rect x="262" y="85" width="2" height="3" fill="#dadce0"/><rect x="272" y="80.5" width="14" height="3.5" fill="#0b67d6"/><rect x="278" y="85" width="2" height="3" fill="#dadce0"/><rect x="288" y="80.5" width="14" height="3.5" fill="#0b67d6"/><rect x="294" y="85" width="2" height="3" fill="#dadce0"/><rect x="304" y="0" width="14" height="84" fill="#0b67d6"/><rect x="310" y="85" width="2" height="3" fill="#dadce0"/><rect x="320" y="80.5" width="14" height="3.5" fill="#0b67d6"/><rect x="326" y="85" width="2" height="3" fill="#dadce0"/><rect x="336" y="80.5" width="14" height="3.5" fill="#0b67d6"/><rect x="342" y="85" width="2" height="3" fill="#dadce0"/><rect x="352" y="80.5" width="14" height="3.5" fill="#0b67d6"/><rect x="358" y="85" width="2" height="3" fill="#dadce0"/><rect x="368" y="0" width="14" height="84" fill="#0b67d6"/><rect x="374" y="85" width="2" height="3" fill="#dadce0"/><rect x="384" y="0" width="14" height="84" fill="#0b67d6"/><rect x="390" y="85" width="2" height="3" fill="#dadce0"/><rect x="400" y="0" width="14" height="84" fill="#0b67d6"/><rect x="406" y="85" width="2" height="3" fill="#dadce0"/><rect x="416" y="0" width="14" height="84" fill="#0b67d6"/><rect x="422" y="85" width="2" height="3" fill="#dadce0"/><rect x="432" y="0" width="14" height="84" fill="#0b67d6"/><rect x="438" y="85" width="2" height="3" fill="#dadce0"/><rect x="448" y="80.5" width="14" height="3.5" fill="#0b67d6"/><rect x="454" y="85" width="2" height="3" fill="#dadce0"/><rect x="464" y="80.5" width="14" height="3.5" fill="#0b67d6"/><rect x="470" y="85" width="2" height="3" fill="#dadce0"/></svg><div class="t " style="left:865px;top:997.1px;font-size:24px;line-height:24px;color:#5f6368;font-weight:400;letter-spacing:1.5px;transform:scaleX(0.9012);transform-origin:0 0;-webkit-text-stroke:0.5px #5f6368;">DEVICE CATEGORY IN LAST 30 MINUTES</div><svg class="r" style="left:1020px;top:1067px;" width="200" height="200" viewBox="0 0 200 200"><circle cx="100" cy="100" r="86" stroke="#035fc8" stroke-width="28" fill="none"/></svg><div class="r" style="left:1035px;top:1314px;width:12px;height:12px;border-radius:50%;background:#035fc8;"></div><div class="t " style="left:1058px;top:1307.3px;font-size:24px;line-height:24px;color:#5f6368;font-weight:400;letter-spacing:1.5px;transform:scaleX(0.8307);transform-origin:0 0;-webkit-text-stroke:0.5px #5f6368;">DESKTOP</div><div class="t " style="left:1058px;top:1340.9px;font-size:45px;line-height:45px;color:#202124;font-weight:400;letter-spacing:0px;transform:scaleX(0.9566);transform-origin:0 0;">100.0%</div><div class="r" style="left:815px;top:1465px;width:770px;height:400px;border-radius:16px;border:2px solid #dadce0;box-sizing:border-box;background:#fff;"></div><div class="t " style="left:864px;top:1519.3px;font-size:28px;line-height:28px;color:#3c4043;font-weight:400;letter-spacing:0px;transform:scaleX(1.0611);transform-origin:0 0;-webkit-text-stroke:0.5px #3c4043;">Users by First user source</div><div class="r" style="left:864px;top:1552px;width:75px;height:0;border-top:2px dashed #80868b;"></div><svg class="r" style="left:1221px;top:1529px;" width="18" height="10" viewBox="0 0 18 10"><path d="M1 1 L17 1 L9 9 Z" fill="#5f6368"/></svg><div class="t " style="left:864px;top:1598.9px;font-size:32px;line-height:32px;color:#202124;font-weight:400;letter-spacing:0px;transform:scaleX(0.9552);transform-origin:0 0;-webkit-text-stroke:0.5px #202124;">#1</div><div class="t " style="left:915px;top:1598.9px;font-size:32px;line-height:32px;color:#202124;font-weight:400;letter-spacing:0px;transform:scaleX(1.0847);transform-origin:0 0;-webkit-text-stroke:0.5px #202124;">(direct)</div><svg class="r" style="left:0px;top:0px;" width="2746" height="1886" viewBox="0 0 2746 1886"><polygon points="923.20,1655.50 925.62,1655.50 925.62,1685.00 921.88,1685.00 921.88,1660.39 916.63,1664.01 915.00,1661.47" fill="#202124"/></svg><div class="t " style="left:915px;top:1701.7px;font-size:24px;line-height:24px;color:#5f6368;font-weight:400;letter-spacing:0px;transform:scaleX(0.9123);transform-origin:0 0;">100%</div><svg class="r" style="left:1156px;top:1658px;" width="360" height="72" viewBox="0 0 360 72"><rect x="0.00" y="68" width="10" height="3" fill="#0b67d6"/><rect x="12.01" y="68" width="10" height="3" fill="#0b67d6"/><rect x="24.02" y="68" width="10" height="3" fill="#0b67d6"/><rect x="36.03" y="68" width="10" height="3" fill="#0b67d6"/><rect x="48.04" y="68" width="10" height="3" fill="#0b67d6"/><rect x="60.05" y="68" width="10" height="3" fill="#0b67d6"/><rect x="72.06" y="68" width="10" height="3" fill="#0b67d6"/><rect x="84.07" y="68" width="10" height="3" fill="#0b67d6"/><rect x="96.08" y="68" width="10" height="3" fill="#0b67d6"/><rect x="108.09" y="68" width="10" height="3" fill="#0b67d6"/><rect x="120.10" y="68" width="10" height="3" fill="#0b67d6"/><rect x="132.11" y="68" width="10" height="3" fill="#0b67d6"/><rect x="144.12" y="68" width="10" height="3" fill="#0b67d6"/><rect x="156.13" y="68" width="10" height="3" fill="#0b67d6"/><rect x="168.14" y="68" width="10" height="3" fill="#0b67d6"/><rect x="180.15" y="68" width="10" height="3" fill="#0b67d6"/><rect x="192.16" y="68" width="10" height="3" fill="#0b67d6"/><rect x="204.17" y="68" width="10" height="3" fill="#0b67d6"/><rect x="216.18" y="68" width="10" height="3" fill="#0b67d6"/><rect x="228.19" y="0" width="10" height="71" fill="#0b67d6"/><rect x="240.20" y="68" width="10" height="3" fill="#0b67d6"/><rect x="252.21" y="68" width="10" height="3" fill="#0b67d6"/><rect x="264.22" y="68" width="10" height="3" fill="#0b67d6"/><rect x="276.23" y="0" width="10" height="71" fill="#0b67d6"/><rect x="288.24" y="0" width="10" height="71" fill="#0b67d6"/><rect x="300.25" y="0" width="10" height="71" fill="#0b67d6"/><rect x="312.26" y="0" width="10" height="71" fill="#0b67d6"/><rect x="324.27" y="0" width="10" height="71" fill="#0b67d6"/><rect x="336.28" y="68" width="10" height="3" fill="#0b67d6"/><rect x="348.29" y="68" width="10" height="3" fill="#0b67d6"/></svg><div class="r" style="left:1615px;top:1465px;width:770px;height:400px;border-radius:16px;border:2px solid #dadce0;box-sizing:border-box;background:#fff;"></div><div class="t " style="left:1664px;top:1519.3px;font-size:28px;line-height:28px;color:#3c4043;font-weight:400;letter-spacing:0px;transform:scaleX(1.0121);transform-origin:0 0;-webkit-text-stroke:0.5px #3c4043;">Users</div><svg class="r" style="left:1749.5px;top:1528px;" width="18" height="10" viewBox="0 0 18 10"><path d="M1 1 L17 1 L9 9 Z" fill="#5f6368"/></svg><div class="t " style="left:1783.6px;top:1519.3px;font-size:28px;line-height:28px;color:#3c4043;font-weight:400;letter-spacing:0px;transform:scaleX(1.0145);transform-origin:0 0;-webkit-text-stroke:0.5px #3c4043;">by</div><div class="t " style="left:1823px;top:1519.3px;font-size:28px;line-height:28px;color:#3c4043;font-weight:400;letter-spacing:0px;transform:scaleX(1.0792);transform-origin:0 0;-webkit-text-stroke:0.5px #3c4043;">Audience</div><div class="r" style="left:1823px;top:1551px;width:126px;height:0;border-top:2px dashed #80868b;"></div><div class="t " style="left:1664px;top:1597.9px;font-size:32px;line-height:32px;color:#202124;font-weight:400;letter-spacing:0px;transform:scaleX(0.9552);transform-origin:0 0;-webkit-text-stroke:0.5px #202124;">#1</div><div class="t " style="left:1715px;top:1597.9px;font-size:32px;line-height:32px;color:#202124;font-weight:400;letter-spacing:0px;transform:scaleX(0.9843);transform-origin:0 0;-webkit-text-stroke:0.5px #202124;">All Users</div><svg class="r" style="left:0px;top:0px;" width="2746" height="1886" viewBox="0 0 2746 1886"><polygon points="1724.20,1655.50 1726.62,1655.50 1726.62,1685.00 1722.88,1685.00 1722.88,1660.39 1717.63,1664.01 1716.00,1661.47" fill="#202124"/></svg><div class="t " style="left:1715px;top:1701.7px;font-size:24px;line-height:24px;color:#5f6368;font-weight:400;letter-spacing:0px;transform:scaleX(0.9123);transform-origin:0 0;">100%</div><svg class="r" style="left:1956px;top:1658px;" width="360" height="72" viewBox="0 0 360 72"><rect x="0.00" y="68" width="10" height="3" fill="#0b67d6"/><rect x="12.01" y="68" width="10" height="3" fill="#0b67d6"/><rect x="24.02" y="68" width="10" height="3" fill="#0b67d6"/><rect x="36.03" y="68" width="10" height="3" fill="#0b67d6"/><rect x="48.04" y="68" width="10" height="3" fill="#0b67d6"/><rect x="60.05" y="68" width="10" height="3" fill="#0b67d6"/><rect x="72.06" y="68" width="10" height="3" fill="#0b67d6"/><rect x="84.07" y="68" width="10" height="3" fill="#0b67d6"/><rect x="96.08" y="68" width="10" height="3" fill="#0b67d6"/><rect x="108.09" y="68" width="10" height="3" fill="#0b67d6"/><rect x="120.10" y="68" width="10" height="3" fill="#0b67d6"/><rect x="132.11" y="68" width="10" height="3" fill="#0b67d6"/><rect x="144.12" y="68" width="10" height="3" fill="#0b67d6"/><rect x="156.13" y="68" width="10" height="3" fill="#0b67d6"/><rect x="168.14" y="68" width="10" height="3" fill="#0b67d6"/><rect x="180.15" y="68" width="10" height="3" fill="#0b67d6"/><rect x="192.16" y="68" width="10" height="3" fill="#0b67d6"/><rect x="204.17" y="68" width="10" height="3" fill="#0b67d6"/><rect x="216.18" y="68" width="10" height="3" fill="#0b67d6"/><rect x="228.19" y="0" width="10" height="71" fill="#0b67d6"/><rect x="240.20" y="68" width="10" height="3" fill="#0b67d6"/><rect x="252.21" y="68" width="10" height="3" fill="#0b67d6"/><rect x="264.22" y="68" width="10" height="3" fill="#0b67d6"/><rect x="276.23" y="0" width="10" height="71" fill="#0b67d6"/><rect x="288.24" y="0" width="10" height="71" fill="#0b67d6"/><rect x="300.25" y="0" width="10" height="71" fill="#0b67d6"/><rect x="312.26" y="0" width="10" height="71" fill="#0b67d6"/><rect x="324.27" y="0" width="10" height="71" fill="#0b67d6"/><rect x="336.28" y="68" width="10" height="3" fill="#0b67d6"/><rect x="348.29" y="68" width="10" height="3" fill="#0b67d6"/></svg><div class="r" style="left:2530px;top:1565px;width:80px;height:80px;border-radius:50%;background:#fff;box-shadow:0 2px 6px rgba(0,0,0,0.25);"></div><svg class="r" style="left:2550px;top:1585px;" width="40" height="40" viewBox="0 0 40 40"><path d="M5 4 H35 V28 H11 L5 34 Z" stroke="#3c4043" stroke-width="3.4" fill="none" stroke-linejoin="round"/><path d="M20 9 V19" stroke="#3c4043" stroke-width="3.4"/><rect x="18.3" y="22" width="3.4" height="3.4" fill="#3c4043"/></svg><div class="r" style="left:2620px;top:362px;width:14px;height:1376px;background:#f1f1f1;"></div><div class="r" style="left:2622px;top:364px;width:10px;height:500px;background:#d3d5d8;border-radius:5px;"></div></div>
</body></html>
